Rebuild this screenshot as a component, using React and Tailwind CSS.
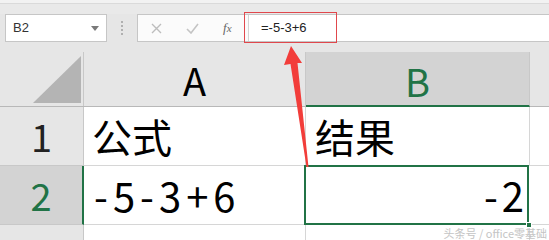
const font = "font-['Noto_Sans_CJK_SC','Noto_Sans',sans-serif]";

function Toolbar() {
  return (
    <div className="h-[52px] flex flex-col bg-[#e6e6e6]">
      <div className="h-[4px] bg-[#f2f2f2] border-b border-[#dadada]" />
      <div className="h-[10px] bg-[#e9e9e9]" />
      <div className="h-[28px] flex items-stretch">
        <div className="ml-[5px] w-[102px] bg-white border border-[#c6c6c6] flex items-center justify-between pl-[7px] pr-[7px]">
          <span className="text-[13px] text-[#333] font-['Liberation_Sans',sans-serif]">B2</span>
          <svg width="8" height="5" viewBox="0 0 8 5">
            <path d="M0 0h8L4 5z" fill="#7a7a7a" />
          </svg>
        </div>
        <div className="w-[30px] flex items-center justify-center">
          <div className="flex flex-col gap-[2px]">
            <span className="w-[2px] h-[2px] bg-[#b0b0b0]" />
            <span className="w-[2px] h-[2px] bg-[#b0b0b0]" />
            <span className="w-[2px] h-[2px] bg-[#b0b0b0]" />
            <span className="w-[2px] h-[2px] bg-[#b0b0b0]" />
          </div>
        </div>
        <div className="flex-1 flex bg-white border border-r-0 border-[#c6c6c6]">
          <div className="w-[111px] flex items-center bg-[#fbfbfb] border-r border-[#d4d4d4]">
            <svg className="ml-[13px]" width="11" height="11" viewBox="0 0 11 11">
              <path d="M1 1l9 9M10 1l-9 9" stroke="#bdbdbd" strokeWidth="1.4" />
            </svg>
            <svg className="ml-[24px]" width="13" height="11" viewBox="0 0 13 11">
              <path d="M1 6l4 4 7-9" fill="none" stroke="#c4c4c4" strokeWidth="1.6" />
            </svg>
            <span className="ml-[24px] text-[13px] italic text-[#666] font-['Liberation_Serif',serif]">f<span className="text-[11px]">x</span></span>
          </div>
          <div className="flex items-center pl-[12px] text-[13px] text-[#222] font-['Liberation_Sans',sans-serif]">
            =-5-3+6
          </div>
        </div>
      </div>
      <div className="h-[10px]" />
    </div>
  );
}

function Grid() {
  const line = "border-[#d6d6d6]";
  return (
    <div className={`flex flex-col ${font}`}>
      <div className="h-[55px] flex border-b border-[#b8b8b8]">
        <div className="w-[84px] shrink-0 border-r border-[#c8c8c8] relative bg-[#e6e6e6]">
          <svg className="absolute left-[33px] top-[4px]" width="49" height="48" viewBox="0 0 49 48">
            <path d="M0 47L48 0v47z" fill="#b4b4b4" />
          </svg>
        </div>
        <div className="w-[222px] shrink-0 border-r border-[#c8c8c8] bg-[#e6e6e6] flex items-center justify-center text-[38px] text-black leading-none pt-[2px]">
          A
        </div>
        <div className="w-[224px] shrink-0 border-r border-[#c8c8c8] bg-[#d3d3d3] border-b-2 border-b-[#217346] -mb-px flex items-center justify-center text-[38px] text-[#217346] leading-none pt-[4px]">
          B
        </div>
        <div className="flex-1 bg-[#e6e6e6]" />
      </div>

      <div className="h-[59px] flex bg-white">
        <div className="w-[84px] shrink-0 bg-[#e6e6e6] border-r border-b border-[#c8c8c8] flex items-center justify-center text-[38px] leading-none text-[#222]">
          1
        </div>
        <div className={`w-[222px] shrink-0 border-r border-b ${line} flex items-center pl-[8px] text-[40px] leading-none text-black`}>
          公式
        </div>
        <div className={`w-[224px] shrink-0 border-r border-b ${line} flex items-center pl-[9px] text-[40px] leading-none text-black`}>
          结果
        </div>
        <div className={`flex-1 border-b ${line}`} />
      </div>

      <div className="h-[59px] flex bg-white">
        <div className="w-[84px] shrink-0 bg-[#d3d3d3] border-r-2 border-r-[#217346] border-b border-b-[#c8c8c8] flex items-center justify-center text-[38px] leading-none text-[#217346]">
          2
        </div>
        <div className={`w-[221px] shrink-0 border-r border-b ${line} flex items-center pl-[10px] text-[40px] leading-none text-black tracking-[5px]`}>
          -5-3+6
        </div>
        <div className={`w-[224px] shrink-0 border-r border-b ${line} relative flex items-center justify-end pr-0 text-[40px] leading-none text-black tracking-[4px]`}>
          -2
          <div className="absolute -left-px -top-px -right-px -bottom-px border-2 border-[#217346]" />
          <div className="absolute -right-[4px] -bottom-[4px] w-[6px] h-[6px] bg-[#217346] border border-white" />
        </div>
        <div className={`flex-1 border-b ${line}`} />
      </div>

      <div className="h-[20px] flex bg-white">
        <div className="w-[84px] shrink-0 bg-[#e6e6e6] border-r border-[#c8c8c8]" />
        <div className={`w-[222px] shrink-0 border-r ${line}`} />
        <div className={`w-[224px] shrink-0 border-r ${line}`} />
      </div>
    </div>
  );
}

export default function App() {
  return (
    <div className="w-[549px] h-[240px] overflow-hidden relative bg-[#e6e6e6]">
      <Toolbar />
      <Grid />
      <div className="absolute left-[244px] top-[12px] w-[93px] h-[31px] border-[1.5px] border-[#e0474c]" />
      <svg className="absolute left-0 top-0 pointer-events-none" width="549" height="240" viewBox="0 0 549 240">
        <polygon points="291,46 302,63 297.5,63 308.5,167 306.5,167 290.5,64 284,65" fill="#f23d3a" />
      </svg>
      <div className="absolute right-[2px] bottom-[1px] text-[11px] leading-none text-[#c4c4c4] font-['Noto_Sans_CJK_SC',sans-serif]">
        头条号 / office零基础
      </div>
    </div>
  );
}
